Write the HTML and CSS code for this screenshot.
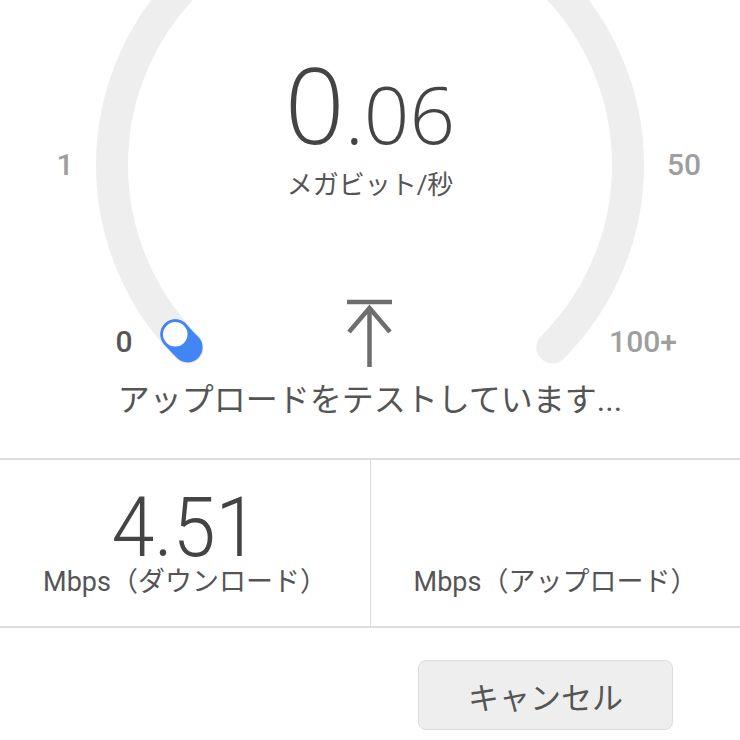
FILE: index.html
```html
<!DOCTYPE html>
<html lang="ja">
<head>
    <meta charset="UTF-8">
    <meta name="viewport" content="width=device-width, initial-scale=1.0">
    <title>速度テスト</title>
    <link rel="stylesheet" href="styles.css">
</head>
<body>

<!-- Gauge -->
<div class="gauge">
    <svg class="gauge-dial" width="740" height="370" viewBox="0 0 740 370">
        <path class="dial-track" d="M 187.6 347.4 A 258 258 0 1 1 552.4 347.4"/>
        <path class="dial-progress" d="M 187.6 347.4 A 258 258 0 0 1 175.3 334.3"/>
        <circle class="dial-knob" cx="175.3" cy="334.3" r="13.5"/>
    </svg>

    <span class="tick tick-dark" style="left:124px;top:342px">0</span>
    <span class="tick" style="left:65px;top:165px">1</span>
    <span class="tick" style="left:684px;top:165px">50</span>
    <span class="tick" style="left:643px;top:342px">100+</span>

    <div class="readout">
        <div class="readout-value"><span class="big">0</span><span class="small">.06</span></div>
        <div class="readout-unit">メガビット/秒</div>
        <svg class="upload-icon" width="48" height="72" viewBox="0 0 48 72">
            <path d="M1 5 H46 M23.5 70 V11 M3 35 L23.5 11 L44 35"/>
        </svg>
    </div>
</div>

<!-- Status -->
<div class="status">アップロードをテストしています...</div>

<!-- Results -->
<div class="results">
    <div class="result">
        <div class="result-value">4.51</div>
        <div class="result-label">Mbps（ダウンロード）</div>
    </div>
    <div class="result">
        <div class="result-value"></div>
        <div class="result-label">Mbps（アップロード）</div>
    </div>
</div>

<!-- Actions -->
<div class="actions">
    <button class="cancel-button">キャンセル</button>
</div>

</body>
</html>
```

FILE: styles.css
```css
body, html {
    margin: 0;
    padding: 0;
    background-color: #fff;
    font-family: Roboto, "Noto Sans CJK JP", sans-serif;
    color: #555;
    overflow: hidden;
}

/* Gauge */
.gauge {
    position: relative;
    width: 740px;
    height: 370px;
}

.gauge-dial {
    position: absolute;
    top: 0;
    left: 0;
}

.dial-track {
    fill: none;
    stroke: #eeeeee;
    stroke-width: 32;
    stroke-linecap: round;
}

.dial-progress {
    fill: none;
    stroke: #4285f4;
    stroke-width: 30;
    stroke-linecap: round;
}

.dial-knob {
    fill: #fff;
    stroke: #4285f4;
    stroke-width: 2.5;
}

.tick {
    position: absolute;
    transform: translate(-50%, -50%);
    font-size: 30px;
    font-weight: 500;
    color: #9e9e9e;
    line-height: 1;
}

.tick-dark {
    color: #555;
}

/* Center readout */
.readout {
    position: relative;
    display: flex;
    flex-direction: column;
    align-items: center;
    padding-top: 51px;
}

.readout-value {
    line-height: 106px;
    height: 106px;
    font-family: "Open Sans", Roboto, sans-serif;
    font-weight: 300;
    color: #444;
}

.readout-value .big {
    font-size: 105px;
}

.readout-value .small {
    font-size: 80px;
}

.readout-unit {
    font-size: 26px;
    line-height: 36px;
    margin-top: 10px;
}

.upload-icon {
    margin-top: 94px;
}

.upload-icon path {
    fill: none;
    stroke: #6e6e6e;
    stroke-width: 4.5;
}

/* Status */
.status {
    height: 88px;
    display: flex;
    justify-content: center;
    align-items: center;
    font-size: 32px;
    padding-bottom: 34px;
    box-sizing: border-box;
}

/* Results */
.results {
    display: grid;
    grid-template-columns: 1fr 1fr;
    border-top: 2px solid #dddddd;
    border-bottom: 2px solid #dddddd;
    height: 170px;
    box-sizing: border-box;
}

.result {
    display: flex;
    flex-direction: column;
    align-items: center;
    padding-top: 30px;
}

.result + .result {
    border-left: 1px solid #dddddd;
}

.result-value {
    font-size: 84px;
    line-height: 76px;
    height: 76px;
    font-weight: 300;
    color: #444;
    transform: scaleX(0.92);
}

.result-label {
    font-size: 27px;
    line-height: 30px;
    margin-top: 1px;
}

/* Actions */
.actions {
    display: flex;
    justify-content: flex-end;
    padding: 32px 67px 0 0;
}

.cancel-button {
    width: 255px;
    height: 70px;
    background-color: #eeeeee;
    border: 1px solid #dddddd;
    border-radius: 8px;
    font-family: Roboto, "Noto Sans CJK JP", sans-serif;
    font-size: 31px;
    color: #555;
}
```
